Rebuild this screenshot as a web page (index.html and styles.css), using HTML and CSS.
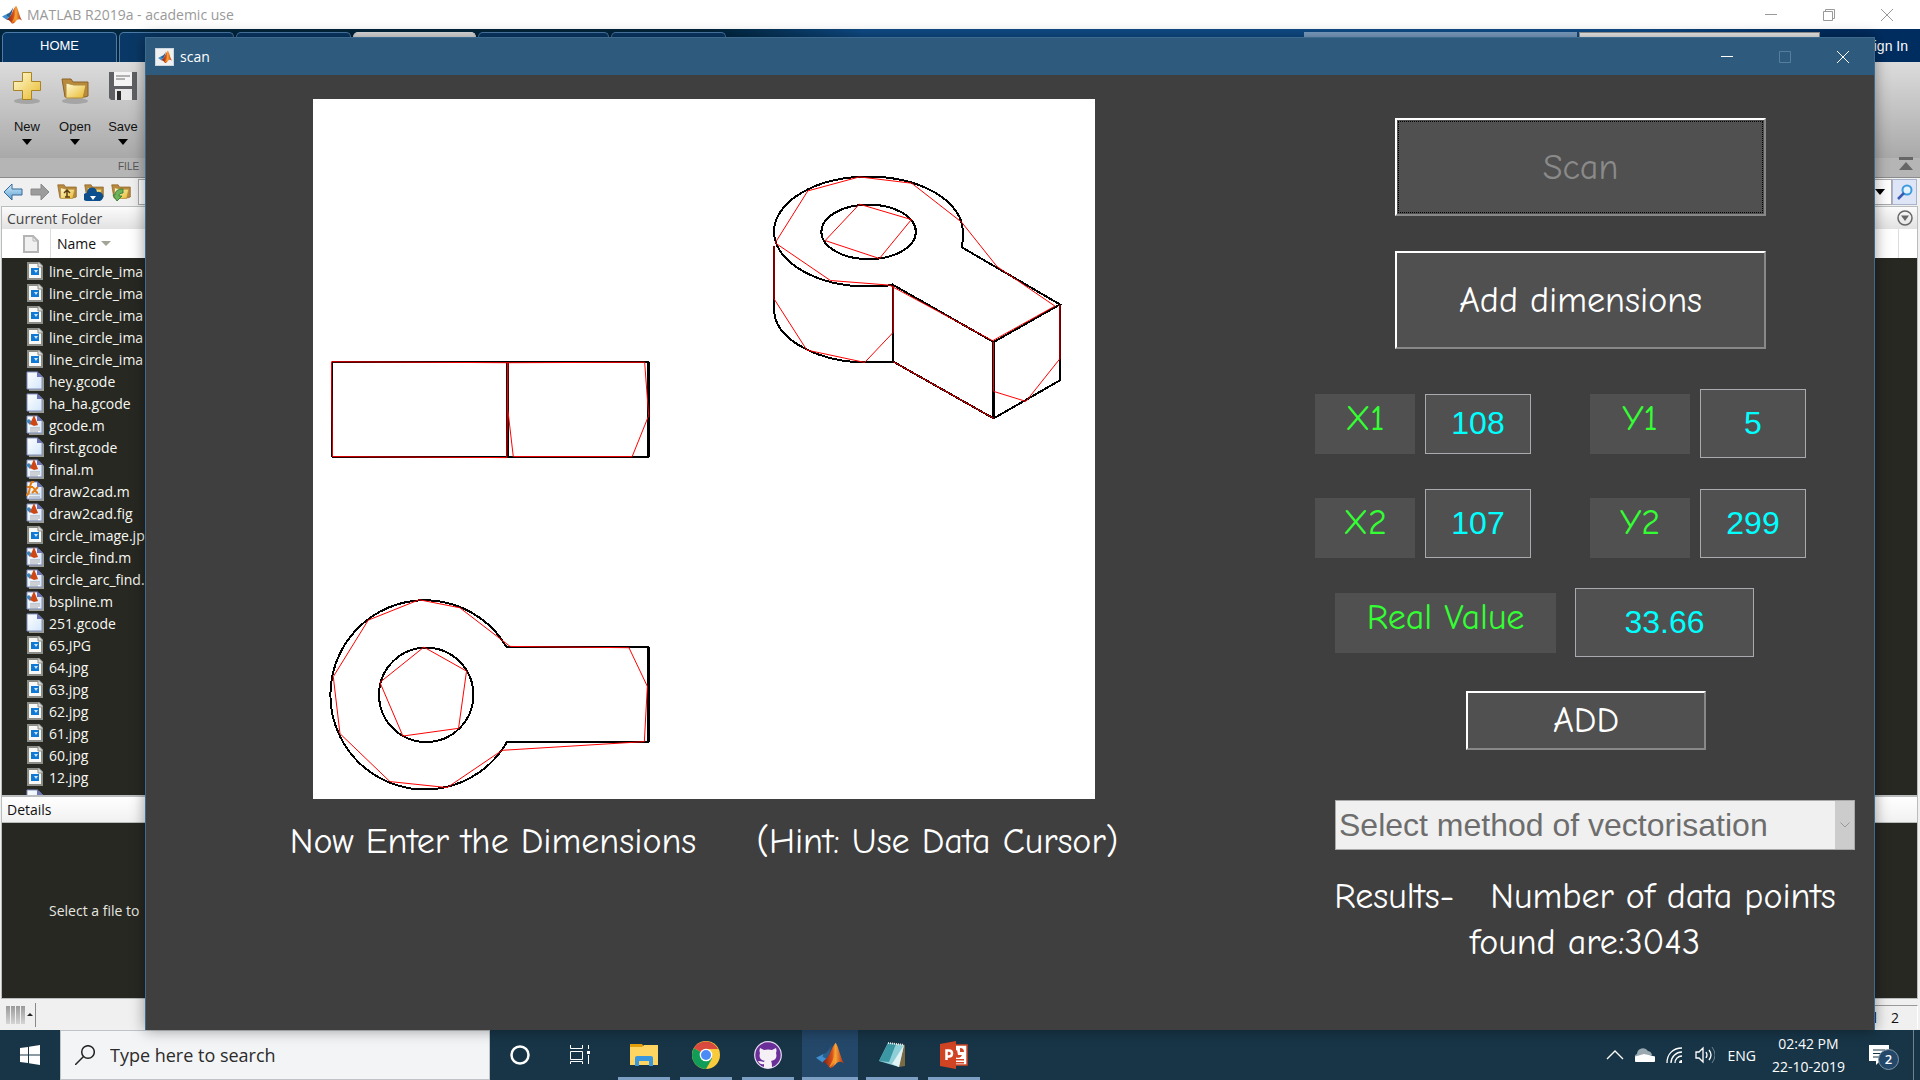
FILE: index.html
```html
<!DOCTYPE html>
<html lang="en">
<head>
<meta charset="utf-8">
<title>MATLAB R2019a - academic use</title>
<link rel="stylesheet" href="styles.css">
</head>
<body>
<svg class="defs" aria-hidden="true">
  <defs>
    <linearGradient id="peak" x1="0" y1="0" x2="1" y2="0"><stop offset="0" stop-color="#7a1f12"/><stop offset=".45" stop-color="#d9501a"/><stop offset=".6" stop-color="#f7a53a"/><stop offset="1" stop-color="#b3260e"/></linearGradient>
    <linearGradient id="gold" x1="0" y1="0" x2="1" y2="1"><stop offset="0" stop-color="#fffbd8"/><stop offset="1" stop-color="#e8b92a"/></linearGradient>
    <linearGradient id="sheet" x1="0" y1="0" x2="1" y2="1"><stop offset="0" stop-color="#fff"/><stop offset="1" stop-color="#d3e6fa"/></linearGradient>
    <linearGradient id="arrowblue" x1="0" y1="0" x2="0" y2="1"><stop offset="0" stop-color="#d5effc"/><stop offset="1" stop-color="#5c9fd0"/></linearGradient>
    <symbol id="matlab" viewBox="0 0 30 28">
      <path d="M0 17l8-4 4 4-5 5z" fill="#3f8fd0"/><path d="M8 13c4-1 6-5 9-10l-3 11-3 4-4-2z" fill="#27608f"/>
      <path d="M7 22l5-5c3-3 4-10 9-16 3 3 5 16 9 22-4-3-7-2-9 1-3 3-4 4-6 4-3-4-4-6-8-6z" fill="url(#peak)"/>
      <path d="M21 2c1 8-2 17-7 25 3 0 5-5 8-7z" fill="#f6a02d" opacity=".8"/>
    </symbol>
    <symbol id="folder" viewBox="0 0 28 24">
      <path d="M1 2h9l2 3h15v14l-3 1H4z" fill="#b98a3e" stroke="#8a6327"/><path d="M5 6l8 2h12l-3 13H5z" fill="url(#gold)" stroke="#b08a3c"/>
    </symbol>
    <symbol id="gcode" viewBox="0 0 18 20">
      <path d="M2 2h11l5 5v13H3z" fill="#9c9c94"/><path d="M1 1h10l5 5v12H1z" fill="url(#sheet)" stroke="#8291c0"/><path d="M11 0v6h6z" fill="#6c74b4"/>
    </symbol>
    <symbol id="image" viewBox="0 0 18 20">
      <path d="M2 2h11l3 3v13H2z" fill="#f8f8f6" stroke="#8d8d88" stroke-width="2"/><path d="M12 1v5h5" fill="#ddd" stroke="#8d8d88"/>
      <path d="M5 7h8v7H5z" fill="#0f79d4"/><path d="M8 9h4l-2 3z" fill="#cfe8ff"/>
    </symbol>
    <symbol id="mfile" viewBox="0 0 18 20">
      <use href="#gcode"/><path d="M4 13h10v4H4z" fill="#fff"/><path d="M4 13h10M4 15h10M4 17h8" stroke="#9aa0aa"/>
      <path d="M0 6l3-2 3 3-2 3z" fill="#3f86b8"/><path d="M4 9l4-9 4 10-4 1z" fill="#cf4514"/>
    </symbol>
    <symbol id="fx" viewBox="0 0 18 20">
      <use href="#gcode"/><path d="M3 13h11M3 16h11" stroke="#9aa0aa"/>
      <path d="M0 14c3 0 3-3 4-8s2-6 4-5M1 6h6M6 6c3 0 3 6 6 6M12 6l-6 6" fill="none" stroke="#e27c14" stroke-width="2"/>
    </symbol>
  </defs>
</svg>

<div class="desktop">
  <section class="matlab">
    <header class="main-title">
      <svg class="logo" viewBox="0 0 30 28"><use href="#matlab"/></svg>
      <span class="main-name">MATLAB R2019a - academic use</span>
      <div class="win-buttons">
        <button type="button" aria-label="Minimize"><svg viewBox="0 0 12 12"><path d="M0 5.5h12"/></svg></button>
        <button type="button" aria-label="Restore"><svg viewBox="0 0 12 12"><path d="M.5 2.500h9v9h-9zM2.500 2.500v-2h9v9h-2"/></svg></button>
        <button type="button" aria-label="Close"><svg viewBox="0 0 12 12"><path d="M0 0l12 12M12 0L0 12"/></svg></button>
      </div>
    </header>
    <nav class="tabs">
      <a class="tab home" href="#home">HOME</a>
      <span class="tab"></span><span class="tab"></span><span class="tab active"></span><span class="tab wide"></span><span class="tab"></span>
      <span class="quick"></span><span class="doc-search"></span>
      <a class="sign" href="#sign">Sign In</a>
    </nav>
    <div class="strip">
      <div class="tools">
        <button type="button" class="tool"><svg viewBox="0 0 30 34"><ellipse cx="15" cy="30" rx="13" ry="3" fill="#8e8e8e" opacity=".6"/><path d="M10.500 1.500h9v9h9v9h-9v9h-9v-9h-9v-9h9z" fill="url(#gold)" stroke="#a98424"/></svg>New<i class="down"></i></button>
        <button type="button" class="tool"><svg viewBox="0 0 30 34"><ellipse cx="15" cy="30" rx="13" ry="3" fill="#8e8e8e" opacity=".6"/><use href="#folder" x="1" y="6" width="28" height="24"/></svg>Open<i class="down"></i></button>
        <button type="button" class="tool"><svg viewBox="0 0 30 34"><path d="M1 1h28v28H3l-2-2z" fill="#5f6063"/><path d="M6 1h18v14H6z" fill="#f5f5f5"/><path d="M8 5h14M8 8h9" stroke="#999" stroke-width="1.500"/><path d="M7 18h17v11H7z" fill="#e8e8e8"/><path d="M9 20h4v9H9z" fill="#2b2b2b"/></svg>Save<i class="down"></i></button>
      </div>
      <div class="group"><span>FILE</span></div>
      <svg class="collapse" viewBox="0 0 14 14"><path d="M0 0h14v3H0zM7 5l7 8H0z"/></svg>
    </div>
    <div class="address">
      <svg viewBox="0 0 20 18"><path d="M1 9l8-8v5h10v6H9v5z" fill="url(#arrowblue)" stroke="#34699a"/></svg>
      <svg viewBox="0 0 20 18"><path d="M19 9l-8-8v5H1v6h10v5z" fill="#9c9c9c" stroke="#8a8a8a"/></svg>
      <svg viewBox="0 0 20 18"><use href="#folder"/><path d="M8 14h5M10 14V8M7 10l3-3 3 3" stroke="#5b3c0c" fill="none" stroke-width="1.500"/></svg>
      <svg viewBox="0 0 20 18"><use href="#folder"/><path d="M3 18a4 4 0 010-8 5 5 0 0110-1 4 4 0 013 9z" fill="#0d4f8c"/><path d="M6 13h6l-3 4z" fill="#fff"/></svg>
      <svg viewBox="0 0 20 18"><use href="#folder"/><path d="M2 12h2c0-4 3-6 8-6v4c-3 0-4 1-4 3h3l-5 5z" fill="#6cb35e" stroke="#3d8335"/></svg>
      <div class="path"><i class="down"></i></div>
      <button type="button" class="find" aria-label="Search folders"><svg viewBox="0 0 16 16"><circle cx="10" cy="6" r="4.500" fill="#e4f3ff" stroke="#3e9bdd" stroke-width="2"/><path d="M7 9l-6 6" stroke="#3a5bb5" stroke-width="2.500"/></svg></button>
    </div>
    <div class="folder">
      <div class="folder-head">Current Folder
        <svg viewBox="0 0 16 16"><circle cx="8" cy="8" r="7" fill="none" stroke="#666" stroke-width="1.500"/><path d="M4 5.500h8L8 11z" fill="#666"/></svg>
      </div>
      <div class="columns"><span class="kind"><svg viewBox="0 0 16 18"><path d="M1 1h9l5 5v11H1z" fill="#f0f0f0" stroke="#b4b4b4" stroke-width="2"/><path d="M10 1v5h5" fill="none" stroke="#b4b4b4"/></svg></span><span class="name">Name <i class="sort"></i></span><span class="col-end"></span></div>
      <ul class="files">
        <li><svg><use href="#image"/></svg>line_circle_ima</li>
        <li><svg><use href="#image"/></svg>line_circle_ima</li>
        <li><svg><use href="#image"/></svg>line_circle_ima</li>
        <li><svg><use href="#image"/></svg>line_circle_ima</li>
        <li><svg><use href="#image"/></svg>line_circle_ima</li>
        <li><svg><use href="#gcode"/></svg>hey.gcode</li>
        <li><svg><use href="#gcode"/></svg>ha_ha.gcode</li>
        <li><svg><use href="#mfile"/></svg>gcode.m</li>
        <li><svg><use href="#gcode"/></svg>first.gcode</li>
        <li><svg><use href="#mfile"/></svg>final.m</li>
        <li><svg><use href="#fx"/></svg>draw2cad.m</li>
        <li><svg><use href="#mfile"/></svg>draw2cad.fig</li>
        <li><svg><use href="#image"/></svg>circle_image.jp</li>
        <li><svg><use href="#mfile"/></svg>circle_find.m</li>
        <li><svg><use href="#mfile"/></svg>circle_arc_find.</li>
        <li><svg><use href="#mfile"/></svg>bspline.m</li>
        <li><svg><use href="#gcode"/></svg>251.gcode</li>
        <li><svg><use href="#image"/></svg>65.JPG</li>
        <li><svg><use href="#image"/></svg>64.jpg</li>
        <li><svg><use href="#image"/></svg>63.jpg</li>
        <li><svg><use href="#image"/></svg>62.jpg</li>
        <li><svg><use href="#image"/></svg>61.jpg</li>
        <li><svg><use href="#image"/></svg>60.jpg</li>
        <li><svg><use href="#image"/></svg>12.jpg</li>
        <li><svg><use href="#gcode"/></svg>Project</li>
      </ul>
      <div class="details-head">Details</div>
      <div class="details">Select a file to</div>
    </div>
    <footer class="status">
      <span class="bars"><i></i><i></i><i></i><i></i></span><i class="up"></i><span class="rule"></span>
      <span class="pos"><span>Col</span><span>2</span></span>
    </footer>
  </section>

  <section class="scan">
    <header class="scan-title">
      <span class="scan-icon"><svg viewBox="0 0 30 28"><use href="#matlab"/></svg></span>
      <span class="scan-name">scan</span>
      <div class="win-buttons">
        <button type="button" aria-label="Minimize"><svg viewBox="0 0 12 12"><path d="M0 5.500h12"/></svg></button>
        <button type="button" aria-label="Maximize" disabled><svg viewBox="0 0 12 12"><path d="M.5.5h11v11H.5z"/></svg></button>
        <button type="button" aria-label="Close"><svg viewBox="0 0 12 12"><path d="M0 0l12 12M12 0L0 12"/></svg></button>
      </div>
    </header>
    <main class="scan-body">
      <div class="plot-side">
        <svg class="axes" viewBox="313 99 782 701" role="img" aria-label="Scanned drawing">
          <g class="ink">
            <path d="M332 362h317M332 457h317M332.500 362v95"/>
            <path class="thick" d="M507.500 362v95M648.500 362v95M648.500 648v95"/>
            <path d="M649 648H507A94.700 94.700 0 1 0 507 743H649"/>
            <circle cx="426.300" cy="695.500" r="47.200"/>
            <ellipse cx="869.200" cy="232" rx="47.300" ry="27.300"/>
            <path d="M962.300 247.300Q964 240 963.500 231.700A94.500 55 0 1 0 869 286.700Q882 286.500 894 285.300"/>
            <path d="M962.300 247.300L1060.700 304.700L994.300 342.300L894 285.300V362L994.300 418.700L1060.700 380.700V304.700"/>
            <path d="M774.700 246V313C778 342 822 363 869 362.700L894 362"/>
            <path class="thick" d="M994.500 342v76"/>
          </g>
          <g class="trace">
            <path d="M331.500 362L508 363L507 458L332.500 457zM508 363L645 362.500L649 416L632.500 457H513.500L508 410z"/>
            <path d="M419.300 600.300L460 608.300L510.300 647L629.300 648.300L647.700 687L644.700 742.300L502.300 751L447.300 788.300L390 782.300L340 734.300L333.300 677.300L368.300 620.700z"/>
            <path d="M424 647.700L466.700 671.700L458.700 729L403 736.700L380 683z"/>
            <path d="M860 177L912.300 183.300L962.300 222.300L997.700 266.700L1055.700 306.300L993.300 341L890 285.300L831 280.700L775.700 243L808.300 191z"/>
            <path d="M860 204.300L912 219.700L880 258.700L825.700 240.700z"/>
            <path d="M774.500 246V299L807.300 350.300L865.300 362.700L893.700 332.700V286M894 362L994.300 418.700M994.300 342V391.700L1026.700 401.700L1060.700 359V305"/>
          </g>
        </svg>
        <p class="hint">Now Enter the Dimensions &nbsp; &nbsp; (Hint: Use Data Cursor)</p>
      </div>
      <form class="panel">
        <button type="button" class="big scan-btn" disabled>Scan</button>
        <button type="button" class="big">Add dimensions</button>
        <div class="points">
          <label for="x1">X1</label><input id="x1" class="short" value="108">
          <label class="second" for="y1">Y1</label><input id="y1" value="5">
          <label class="low" for="x2">X2</label><input id="x2" value="107">
          <label class="second low" for="y2">Y2</label><input id="y2" value="299">
        </div>
        <div class="real"><label for="real">Real Value</label><input id="real" value="33.66"></div>
        <button type="button" class="add">ADD</button>
        <div class="method">
          <select aria-label="Vectorisation method" disabled><option>Select method of vectorisation</option></select>
          <span class="arrow"><svg viewBox="0 0 10 6"><path d="M.5.5L5 5l4.500-4.500"/></svg></span>
        </div>
        <p class="results">Results- &nbsp; Number of data points found are:3043</p>
      </form>
    </main>
  </section>
</div>

<footer class="taskbar">
  <button type="button" class="start" aria-label="Start"><svg viewBox="0 0 20 20"><path d="M0 3l8-1v7.500H0zM9 1.800L20 0v9.500H9zM0 10.500h8V18l-8-1zM9 10.500h11V20L9 18.200z" fill="#fff"/></svg></button>
  <label class="search"><svg viewBox="0 0 20 20"><circle cx="13" cy="7" r="6.300"/><path d="M8.500 11.500L0 20"/></svg><input type="text" placeholder="Type here to search" aria-label="Search"></label>
  <div class="apps">
    <button type="button" class="plain" aria-label="Cortana"><svg viewBox="0 0 28 28"><circle cx="14" cy="14" r="8.500" fill="none" stroke="#fff" stroke-width="2.500"/></svg></button>
    <button type="button" class="plain" aria-label="Task view"><svg viewBox="0 0 28 28"><path d="M4.500 4v3.500h12V4M4.500 10.500h12v8h-12zM4.500 23v-2.500h12V23M22.500 4v4M22.500 14v9" fill="none" stroke="#fff"/><path d="M21 10h3v3h-3z" fill="#fff"/></svg></button>
    <button type="button" class="app" aria-label="File Explorer"><svg viewBox="0 0 28 28"><path d="M0 3h12l2 3H0z" fill="#e5a00d"/><path d="M0 6h12l2-2h14v20H0z" fill="#ffd562"/><path d="M5 25v-8q0-2 2-2h14q2 0 2 2v8h-4v-5H9v5z" fill="#3b97dd"/></svg></button>
    <button type="button" class="app" aria-label="Chrome"><svg viewBox="0 0 28 28"><circle cx="14" cy="14" r="14" fill="#f9cb3c"/><path d="M14 14L1.900 7A14 14 0 0 0 14 28l6-10.500z" fill="#119d58"/><path d="M14 14L1.900 7A14 14 0 0 1 26.100 8H14z" fill="#db4a3e"/><circle cx="14" cy="14" r="6.300" fill="#fff"/><circle cx="14" cy="14" r="5" fill="#4c8bf5"/></svg></button>
    <button type="button" class="app" aria-label="GitHub Desktop"><svg viewBox="0 0 28 28"><circle cx="14" cy="14" r="13.300" fill="#6b2f9a" stroke="#e8dff0" stroke-width="1.200"/><path d="M6 7l4 2q4-1 8 0l4-2q1 3 0 5 2 7-5 8 1 1 1 7h-8v-4q-4 1-6-3 3 0 6 1 0-1 1-1-7-1-5-8-1-2 0-5z" fill="#f4f0f6"/></svg></button>
    <button type="button" class="app current" aria-label="MATLAB"><svg viewBox="0 0 30 28"><use href="#matlab"/></svg></button>
    <button type="button" class="app" aria-label="Notepad"><svg viewBox="0 0 28 28"><path d="M10 2l17 2v21l-6 1z" fill="#7b6a43"/><path d="M10 2l16 2-5 22-20-6z" fill="#8fd0d8"/><path d="M10 2l8 1-7 18-10-1z" fill="#3c97a5"/><path d="M26 4l-5 22-7-3z" fill="#e2f3f5"/><path d="M10 2l16 2" stroke="#eee" stroke-width="2" stroke-dasharray="1 1"/></svg></button>
    <button type="button" class="app" aria-label="PowerPoint"><svg viewBox="0 0 28 28"><path d="M14 4h13v20H14z" fill="#fff" stroke="#d04423" stroke-width="1.500"/><path d="M17 9a4 4 0 1 0 5 5h-4z" fill="#d04423"/><path d="M20 7a4 4 0 0 1 4 4h-4zM16 18h8v1.500h-8zM16 21h8v1.500h-8z" fill="#d04423"/><path d="M0 3l16-3v28L0 25z" fill="#d04423"/><path d="M6.500 19V9.500H9q3 0 3 3t-3 3H6.500" fill="none" stroke="#fff" stroke-width="2.500"/></svg></button>
  </div>
  <div class="tray">
    <svg viewBox="0 0 20 20"><path d="M2 14l8-8 8 8" class="line"/></svg>
    <svg viewBox="0 0 20 20"><path d="M1 16a4 4 0 0 1 1-7 6 6 0 0 1 11-3 5 5 0 0 1 4 4z" fill="#9aa8b0"/><path d="M2 17a3 3 0 0 1 0-6l7-2 9 2a3 3 0 0 1 0 6z" fill="#fff"/></svg>
    <svg viewBox="0 0 20 20"><path d="M2 18C2 9 8 3 17 3M6 18c0-6 5-11 11-11M10 18c0-4 3-7 7-7" class="line"/><path d="M14 18a3 3 0 0 1 3-3v3z" fill="#fff"/></svg>
    <svg viewBox="0 0 20 20"><path d="M1 7h3l4-4v14l-4-4H1zM11 7q2 3 0 6M14 5q4 5 0 10" class="line"/><path d="M17 2q6 8 0 16" fill="none" stroke="#71838d"/></svg>
    <span class="lang">ENG</span>
    <span class="clock">02:42 PM<br>22-10-2019</span>
    <button type="button" class="notes" aria-label="Notifications"><svg viewBox="0 0 20 20"><path d="M0 0h20v16h-9l-4 4v-4H0z" fill="#fff"/><path d="M4 5h12M4 8.500h12M4 12h8" stroke="#173547" stroke-width="1.200"/></svg><span class="badge">2</span></button>
    <span class="edge"></span>
  </div>
</footer>
</body>
</html>
```
FILE: styles.css
```css
* { box-sizing: border-box; }
body {
  margin: 0;
  height: 100vh;
  display: flex;
  flex-direction: column;
  overflow: hidden;
  font-family: "Segoe UI", "Open Sans", "Noto Sans", sans-serif;
  font-size: 14px;
  color: #111;
}
button, input, select { font: inherit; color: inherit; margin: 0; }
button { background: none; border: 0; padding: 0; }
a { color: inherit; text-decoration: none; }
p { margin: 0; }
svg { display: block; flex: none; }
.defs { position: absolute; width: 0; height: 0; }
.desktop { position: relative; flex: 1; min-height: 0; }

/* main window */
.matlab { height: 100%; display: flex; flex-direction: column; background: #f0f0f0; }
.main-title { height: 29px; flex: none; display: flex; align-items: center; background: #fff; color: #999; padding-left: 2px; gap: 5px; }
.logo { width: 20px; height: 19px; }
.win-buttons { margin-left: auto; display: flex; align-self: stretch; }
.win-buttons button { width: 58px; display: flex; align-items: center; justify-content: center; }
.win-buttons svg { width: 12px; height: 12px; fill: none; stroke: currentColor; }
.main-title .win-buttons { padding-right: 4px; }

.tabs { height: 33px; flex: none; display: flex; align-items: stretch; gap: 2px; padding: 3px 12px 0 2px; background: linear-gradient(90deg, #00253c 0, #00253c 37%, #0f4c88 45%, #0f4c88 85%, #002d60 95%); }
.tab { width: 115px; border: 1px solid #4d7ba5; border-bottom: 0; border-radius: 5px 5px 0 0; background: #0a3866; }
.tab.home { display: flex; align-items: center; justify-content: center; color: #fff; font: 13px "Liberation Sans", Arial, sans-serif; padding-bottom: 4px; }
.tab.active { width: 123px; background: #e2e2e2; border-color: #e2e2e2; }
.tab.wide { width: 131px; }
.quick { width: 273px; margin-left: auto; background: #7fa3c9; }
.doc-search { width: 241px; margin-right: 42px; background: #f2f2f2; border: 1px solid #999; }
.sign { color: #fff; align-self: center; font: 14px "Liberation Sans", Arial, sans-serif; padding-bottom: 3px; }

.strip { flex: none; display: grid; grid-template-rows: 96px 19px; position: relative; background: linear-gradient(#dcdcdc, #a9a9a9 96px); border-bottom: 1px solid #8b8b8b; }
.tools { display: flex; padding-left: 3px; }
.tool { width: 48px; display: flex; flex-direction: column; align-items: center; font: 13px/16px "Liberation Sans", Arial, sans-serif; padding-top: 9px; }
.tool svg { width: 30px; height: 34px; margin-bottom: 14px; }
.down { width: 0; height: 0; border: 5px solid transparent; border-top: 6px solid #000; border-bottom: 0; }
.tool .down { margin-top: 4px; }
.group { background: #b5b5b5; font: 10px/18px "Liberation Sans", Arial, sans-serif; color: #555; padding-left: 118px; }
.collapse { position: absolute; right: 7px; top: 95px; width: 14px; height: 14px; fill: #666; }

.address { height: 28px; flex: none; display: flex; align-items: center; gap: 7px; padding: 0 3px; }
.address > svg { width: 20px; height: 18px; }
.path { flex: 1; height: 26px; background: #fff; border: 1px solid #aaa; display: flex; align-items: center; justify-content: flex-end; padding-right: 6px; margin-right: -7px; }
.find { width: 25px; height: 26px; border: 1px solid #a9b4cc; background: #dde5f6; display: flex; align-items: center; justify-content: center; }
.find svg { width: 16px; height: 16px; }

.folder { flex: 1; min-height: 0; display: flex; flex-direction: column; margin: 0 2px 0 1px; border: 1px solid #b9bdbd; background: #272822; }
.folder-head { height: 22px; flex: none; display: flex; align-items: center; justify-content: space-between; padding: 0 4px 0 5px; color: #444; background: linear-gradient(#fbfbfb, #e2e2e2); }
.folder-head svg { width: 16px; height: 16px; }
.columns { height: 29px; flex: none; display: flex; background: #fff; font-size: 14px; }
.kind { width: 49px; border-right: 1px solid #ddd; display: flex; align-items: center; justify-content: center; padding-left: 10px; }
.kind svg { width: 16px; height: 18px; }
.name { display: flex; align-items: center; gap: 5px; padding-left: 6px; }
.sort { width: 0; height: 0; border: 5px solid transparent; border-top-color: #a3a396; border-bottom: 0; }
.col-end { width: 19px; margin-left: auto; border-left: 1px solid #ddd; }
.files { flex: 1; min-height: 0; overflow: hidden; list-style: none; margin: 0; padding: 2px 0 0 24px; color: #f8f8f2; }
.files li { height: 22px; display: flex; align-items: center; gap: 5px; }
.files svg { width: 18px; height: 20px; }
.details-head { height: 28px; flex: none; display: flex; align-items: center; padding-left: 5px; background: linear-gradient(#fff, #f1f1f1); border: solid #b9bdbd; border-width: 2px 0 1px; }
.details { height: 175px; flex: none; display: flex; align-items: center; padding-left: 47px; color: #e6e6e0; }
.status { height: 31px; flex: none; display: flex; align-items: center; padding-left: 6px; gap: 2px; }
.bars { display: flex; gap: 1px; }
.bars i { width: 4px; height: 18px; background: linear-gradient(#999, #d5d5d5); }
.up { border: 3px solid transparent; border-bottom-color: #222; border-top: 0; }
.rule { width: 1px; height: 24px; background: #888; }
.pos { margin: 5px 2px 0 auto; border-top: 1px solid #999; border-right: 1px solid #fff; height: 24px; display: flex; align-items: center; gap: 14px; padding: 0 18px 0 30px; }

/* scan window */
.scan { position: absolute; left: 145px; right: 45px; top: 37px; bottom: 0; display: flex; flex-direction: column; background: #3f3f3f; border: 1px solid #3d6a8f; border-bottom: 0; box-shadow: 0 0 14px rgba(0, 0, 0, .4); }
.scan-title { height: 37px; flex: none; display: flex; align-items: center; gap: 6px; padding: 0 2px 0 9px; background: #2e5a7d; color: #fff; }
.scan-icon { width: 19px; height: 18px; background: #f0f0f0; border: 1px solid #c9d6e0; display: flex; align-items: center; justify-content: center; }
.scan-icon svg { width: 14px; height: 13px; }
.scan-title .win-buttons button:disabled { color: #577e9c; }
.scan-body { flex: 1; min-height: 0; display: grid; grid-template-columns: 1fr 540px; padding: 24px 19px 0 0; font-family: "Comic Sans MS", "Comic Neue", "Noto Sans", sans-serif; font-size: 36px; color: #fff; }
.plot-side { padding-right: 53px; display: flex; flex-direction: column; align-items: center; }
.axes { width: 70%; background: #fff; }
.ink { fill: none; stroke: #000; stroke-width: 2; shape-rendering: crispEdges; }
.thick { stroke-width: 3; }
.trace { fill: none; stroke: #f00; stroke-width: 1; }
.hint { margin-top: 20px; line-height: 46px; white-space: nowrap; }

.panel { display: flex; flex-direction: column; padding-top: 19px; }
.big, .add { background: #505050; border: 2px solid; border-color: #fff #888 #888 #fff; }
.big { width: 371px; height: 98px; margin: 0 0 35px 80px; }
.scan-btn { color: #8a8a8a; outline: 1px dotted #000; outline-offset: -4px; }
.points { display: grid; grid-template-columns: 100px 106px 149px 106px; column-gap: 10px; row-gap: 31px; align-items: center; padding-top: 5px; }
.points .second { margin-left: 49px; }
.points .low { align-self: end; }
.panel label { height: 60px; background: #505050; color: #3f3; text-align: center; line-height: 50px; }
.panel input { width: 100%; height: 69px; background: #505050; border: 1px solid #a9a9b0; color: #0ff; text-align: center; font-family: Arial, "Liberation Sans", sans-serif; font-size: 32px; }
.panel .short { height: 60px; }
.real { display: flex; align-items: center; gap: 19px; margin: 30px 0 34px 20px; }
.real label { width: 221px; }
.panel .real input { width: 179px; }
.add { width: 240px; height: 59px; margin-left: 151px; }
.method { height: 50px; margin: 50px 0 0 20px; display: flex; border: 1px solid #a9a9a9; background: #f0f0f0; }
.method select { appearance: none; flex: 1; border: 0; padding: 0 3px; background: none; color: #6d6d6d; opacity: 1; font-family: Arial, "Liberation Sans", sans-serif; font-size: 32px; }
.arrow { width: 19px; background: #ccc; display: flex; align-items: center; justify-content: center; }
.arrow svg { width: 10px; height: 6px; fill: none; stroke: #999; }
.results { margin-top: 24px; line-height: 46px; text-align: center; }

/* taskbar */
.taskbar { height: 50px; flex: none; display: flex; background: #173547; color: #fff; }
.start { width: 60px; display: flex; align-items: center; justify-content: center; }
.start svg { width: 20px; height: 20px; }
.search { width: 430px; display: flex; align-items: center; gap: 15px; padding-left: 14px; background: #f3f4f6; border: 1px solid #bfc3c7; color: #2b2b2b; }
.search svg { width: 20px; height: 20px; fill: none; stroke: #222; stroke-width: 1.500; }
.search input { flex: 1; min-width: 0; border: 0; background: none; padding: 0; font-size: 18px; }
.search input::placeholder { color: #2b2b2b; opacity: 1; }
.apps { display: flex; gap: 10px; }
.apps button { width: 52px; display: flex; align-items: center; justify-content: center; border-bottom: 3px solid transparent; padding-top: 3px; }
.apps .plain { width: 50px; }
.apps .plain:first-child { margin-left: 5px; }
.apps .app { border-bottom-color: #7d9fc4; }
.apps .plain + .app { margin-left: 3px; }
.apps .current { width: 56px; background: #24486a; margin: 0 -2px; }
.apps svg { width: 28px; height: 28px; }
.tray { margin-left: auto; display: flex; align-items: center; gap: 10px; }
.tray > svg { width: 20px; height: 20px; }
.line { fill: none; stroke: #fff; stroke-width: 1.300; }
.lang { margin-left: 2px; }
.clock { text-align: center; line-height: 23px; margin-left: 6px; }
.notes { position: relative; width: 30px; height: 30px; margin-left: 14px; }
.notes svg { width: 20px; height: 20px; }
.badge { position: absolute; left: 9px; top: 9px; width: 21px; height: 21px; border-radius: 50%; border: 1px solid #8297a5; background: #24486a; font-size: 13px; line-height: 19px; font-weight: 600; text-align: center; }
.edge { width: 1px; align-self: stretch; background: #71838d; margin: 0 6px 0 4px; }
```
